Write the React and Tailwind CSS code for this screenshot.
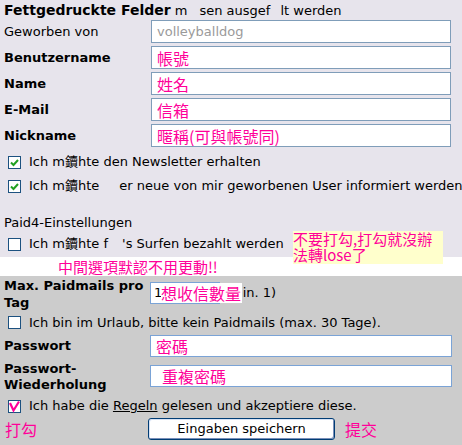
import React from 'react'

const FONT = "font-['DejaVu_Sans','Noto_Sans_CJK_TC',sans-serif]"
const CJK = "font-['Noto_Sans_CJK_TC','DejaVu_Sans',sans-serif]"
const PINK = 'text-[#ff0099]'

function Box({ checked, pink }) {
  return (
    <span className="relative inline-block w-[13px] h-[13px] border border-[#1c5180] bg-white shrink-0">
      {checked && !pink && (
        <svg viewBox="0 0 13 13" className="absolute -left-px -top-px w-[13px] h-[13px]">
          <path d="M3 6.5 L5.5 9 L10 4" fill="none" stroke="#21a121" strokeWidth="2" />
        </svg>
      )}
      {checked && pink && (
        <svg viewBox="0 0 13 13" className="absolute -left-px -top-px w-[13px] h-[13px]">
          <path d="M2 3 L5.5 10.5 L11 1.5" fill="none" stroke="#ff0099" strokeWidth="2.2" />
        </svg>
      )}
    </span>
  )
}

function Gap({ w }) {
  return <span className={`inline-block ${w}`} />
}

function Field({ label, bold = true, children, grey }) {
  return (
    <div className="flex items-center h-[23px] mb-[3px]">
      <div className={`w-[147px] shrink-0 ${bold ? 'font-bold' : ''}`}>{label}</div>
      <div
        className={`w-[300px] h-[23px] bg-white border border-[#7f9db9] flex items-center pl-[5px] overflow-hidden whitespace-nowrap ${
          grey ? 'text-[#9a9a9a]' : `${PINK} ${CJK} text-[16px]`
        }`}
      >
        {children}
      </div>
    </div>
  )
}

export default function App() {
  return (
    <div className={`w-[462px] h-[445px] overflow-hidden text-[13px] text-black ${FONT}`}>
      {/* top section */}
      <div className="relative bg-[#e7e4ec] pl-[4px] pt-px">
        <div className="h-[19px] leading-[19px] whitespace-nowrap">
          <span className="font-bold text-[14px]">Fettgedruckte Felder</span> m<Gap w="w-[12px]" />sen ausgef<Gap w="w-[10px]" />lt werden
        </div>

        <Field label="Geworben von" bold={false} grey>volleyballdog</Field>
        <Field label="Benutzername">帳號</Field>
        <Field label="Name">姓名</Field>
        <Field label="E-Mail">信箱</Field>
        <Field label="Nickname">暱稱(可與帳號同)</Field>

        <div className="flex items-center gap-[8px] h-[24px] pl-[4px] whitespace-nowrap">
          <Box checked />
          <span>Ich m鑟hte den Newsletter erhalten</span>
        </div>
        <div className="flex items-center gap-[8px] h-[24px] pl-[4px] whitespace-nowrap">
          <Box checked />
          <span>
            Ich m鑟hte<Gap w="w-[20px]" />er neue von mir geworbenen User informiert werden
          </span>
        </div>

        <div className="h-[20px] leading-[20px] mt-[15px]">Paid4-Einstellungen</div>
        <div className="flex items-center gap-[8px] h-[24px] pl-[4px] pb-[2px] whitespace-nowrap">
          <Box />
          <span>
            Ich m鑟hte f<Gap w="w-[14px]" />'s Surfen bezahlt werden
          </span>
        </div>

        <div
          className={`absolute left-[293px] top-[231px] w-[150px] h-[33px] bg-[#ffffcc] ${PINK} ${CJK} text-[15px] leading-[16px] z-10`}
        >
          不要打勾,打勾就沒辦
          <br />
          法轉lose了
        </div>
      </div>

      {/* white note band */}
      <div className={`bg-white h-[19px] pl-[58px] ${PINK} ${CJK} text-[15px] leading-[19px]`}>中間選項默認不用更動!!</div>

      {/* grey section */}
      <div className="bg-[#cccccc] pl-[4px] h-[170px]">
        <div className="flex h-[35px]">
          <div className="w-[146px] shrink-0 font-bold leading-[17px] pt-[1px]">
            Max. Paidmails pro
            <br />
            Tag
          </div>
          <div className="relative flex items-start mt-[6px] whitespace-nowrap">
            <div className="w-[70px] h-[22px] bg-white border border-[#7aa3d6] flex items-center pl-[3px]">1</div>
            <span className="ml-[5px] leading-[22px]">(min. 1)</span>
            <span
              className={`absolute left-[11px] top-[1px] h-[20px] bg-white pr-[1px] ${PINK} ${CJK} text-[16px] leading-[20px]`}
            >
              想收信數量
            </span>
          </div>
        </div>

        <div className="flex items-center gap-[8px] h-[23px] pl-[4px] whitespace-nowrap">
          <Box />
          <span>Ich bin im Urlaub, bitte kein Paidmails (max. 30 Tage).</span>
        </div>

        <div className="flex items-center h-[22px] mt-px">
          <div className="w-[146px] shrink-0 font-bold">Passwort</div>
          <div className={`w-[302px] h-[22px] bg-white border border-[#7aa3d6] pl-[5px] ${PINK} ${CJK} text-[16px] leading-[20px]`}>密碼</div>
        </div>

        <div className="flex h-[34px] mt-[4px]">
          <div className="w-[146px] shrink-0 font-bold leading-[16px]">
            Passwort-
            <br />
            Wiederholung
          </div>
          <div className={`w-[302px] h-[22px] mt-[4px] bg-white border border-[#7aa3d6] pl-[11px] ${PINK} ${CJK} text-[16px] leading-[20px]`}>重複密碼</div>
        </div>

        <div className="flex items-center gap-[8px] h-[22px] pl-[4px] whitespace-nowrap">
          <Box checked pink />
          <span>
            Ich habe die <span className="underline">Regeln</span> gelesen und akzeptiere diese.
          </span>
        </div>

        <div className="flex items-center h-[23px]">
          <div className={`w-[144px] shrink-0 pl-px ${PINK} ${CJK} text-[16px]`}>打勾</div>
          <div className="w-[187px] h-[22px] bg-white border border-[#003c74] rounded-[3px] shadow-[inset_-1px_-1px_0_#7a8fb8,inset_1px_1px_0_#d6e2f5] flex items-center justify-center">
            Eingaben speichern
          </div>
          <div className={`ml-[10px] ${PINK} ${CJK} text-[16px]`}>提交</div>
        </div>
      </div>
    </div>
  )
}
